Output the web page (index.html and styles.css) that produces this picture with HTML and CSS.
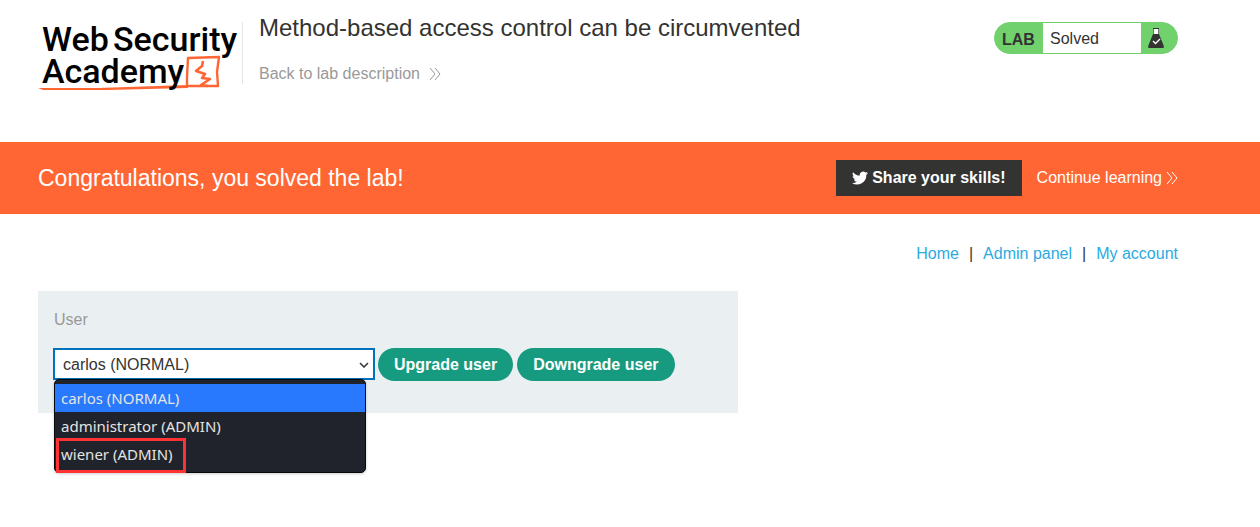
FILE: index.html
```html
<!DOCTYPE html>
<html lang="en">
<head>
<meta charset="utf-8">
<meta name="viewport" content="width=device-width, initial-scale=1">
<title>Method-based access control can be circumvented</title>
<link rel="stylesheet" href="styles.css">
</head>
<body>
<header class="lab-header wrap">
  <a class="logo" href="#" aria-label="Web Security Academy">
    <svg width="204" height="76" viewBox="0 0 204 76">
      <g fill="none" stroke="#ff6633" stroke-linejoin="round">
        <path stroke-width="2.4" d="M149 69 149 59 150 40 181 39 179 54 180 68 149 68"/>
        <path stroke-width="2.6" d="M165 43 164 48 158 53 167 56 164 60 172 61 163 67 170 68"/>
      </g>
      <path fill="#ff6633" d="M0 70 60 70 150 67 150 70 70 72 5 72Z"/>
      <text class="logo-text" x="4" y="33">Web</text>
      <text class="logo-text" x="75" y="33">Security</text>
      <text class="logo-text" x="4" y="65">Academy</text>
    </svg>
  </a>
  <div class="title">
    <h1>Method-based access control can be circumvented</h1>
    <a class="back" href="#">Back to lab description
      <svg width="12" height="12" viewBox="0 0 12 12" fill="none" stroke="currentColor"><path d="M1 0 6 6 1 12M6 0 11 6 6 12"/></svg>
    </a>
  </div>
  <div class="status">
    <span class="status-label">LAB</span>
    <span class="status-text">Solved</span>
    <svg class="flask" width="16" height="20" viewBox="0 0 16 20"><path fill="#fff" d="M6 1h4v6H6z"/><path fill="#333332" d="M5 0h6v1H5z"/><path fill="#777" d="M5 1h1v5H5zM10 1h1v5h-1z"/><path fill="#333332" d="M5 6h6l5 12.500q0 1.500-1.500 1.500h-13Q0 20 0 18.500Z"/><path d="m5 13 2.500 2.500L12 11" fill="none" stroke="#fff" stroke-width="1.300"/></svg>
  </div>
</header>
<section class="banner wrap">
  <h2>Congratulations, you solved the lab!</h2>
  <button class="share" type="button">
    <svg width="16" height="16" viewBox="0 0 24 24" fill="#fff"><path d="M24 4.600a10 10 0 0 1-2.800.8 4.900 4.900 0 0 0 2.100-2.700 10 10 0 0 1-3.100 1.200 4.900 4.900 0 0 0-8.400 4.500A14 14 0 0 1 1.700 3.200a4.900 4.900 0 0 0 1.500 6.500 4.900 4.900 0 0 1-2.200-.6 4.900 4.900 0 0 0 3.900 4.900 4.900 4.900 0 0 1-2.200.1 4.900 4.900 0 0 0 4.600 3.400A9.900 9.900 0 0 1 0 19.500a14 14 0 0 0 21.500-12.400A10 10 0 0 0 24 4.600Z"/></svg>
    Share your skills!
  </button>
  <a class="continue" href="#">Continue learning
    <svg width="12" height="12" viewBox="0 0 12 12" fill="none" stroke="currentColor"><path d="M1 0 6 6 1 12M6 0 11 6 6 12"/></svg>
  </a>
</section>
<main class="wrap">
  <nav class="links">
    <a href="#">Home</a><span>|</span><a href="#">Admin panel</a><span>|</span><a href="#">My account</a>
  </nav>
  <form class="panel">
    <label for="user">User</label>
    <div class="controls">
      <div class="picker">
        <select id="user">
          <option>carlos (NORMAL)</option>
          <option>administrator (ADMIN)</option>
          <option>wiener (ADMIN)</option>
        </select>
        <svg class="chevron" width="10" height="6" viewBox="0 0 10 6" fill="none" stroke="#333332" stroke-width="1.500"><path d="m1 1 4 4 4-4"/></svg>
        <ul class="menu">
          <li class="active">carlos (NORMAL)</li>
          <li>administrator (ADMIN)</li>
          <li class="marked">wiener (ADMIN)</li>
        </ul>
      </div>
      <button class="pill" type="button">Upgrade user</button>
      <button class="pill" type="button">Downgrade user</button>
    </div>
  </form>
</main>
</body>
</html>
```
FILE: styles.css
```css
*, *::after { box-sizing: border-box; }
body {
  margin: 0;
  min-height: 100vh;
  background: #fff;
  color: #333332;
  font: 16px/20px "Liberation Sans", Arial, sans-serif;
}
a { color: inherit; text-decoration: none; }
h1, h2 { margin: 0; font-size: 24px; line-height: 28px; font-weight: 400; }
svg { flex: none; }
.wrap { padding-left: 38px; padding-right: 82px; }

.lab-header { display: flex; align-items: flex-start; padding-top: 14px; padding-bottom: 48px; }
.logo { padding-top: 4px; }
.logo svg { display: block; }
.logo-text {
  font: 500 34px Roboto, "Liberation Sans", sans-serif;
  fill: #000;
}
.title { flex: 1; height: 62px; margin-top: 8px; padding-left: 16px; border-left: 1px solid #e4e4e4; margin-bottom: 10px; }
.title h1 { margin-top: -8px; }
.back { display: flex; align-items: center; gap: 9px; margin-top: 22px; color: #999; }

.status {
  display: flex;
  align-items: center;
  height: 32px;
  width: 184px;
  margin-top: 8px;
  border: 1px solid #70d16d;
  border-radius: 16px;
  background: #70d16d;
}
.status-label { width: 48px; padding: 3px 0 0 7px; font-weight: 700; }
.status-text { width: 98px; padding: 1px 0 0 7px; background: #fff; line-height: 29px; }
.flask { margin-left: 7px; }

.banner { display: flex; align-items: center; height: 72px; background: #ff6633; color: #fff; }
.banner h2 { flex: 1; font-size: 23px; }
.share {
  display: flex;
  align-items: center;
  gap: 4px;
  height: 36px;
  margin-right: 15px;
  padding: 0 16px;
  border: 0;
  background: #333332;
  color: #fff;
  font: 700 16px/20px "Liberation Sans", Arial, sans-serif;
}
.continue { display: flex; align-items: center; gap: 4px; }

.links { display: flex; justify-content: flex-end; gap: 10px; padding-top: 30px; color: #29abe2; }
.links span { color: #333332; }

main { padding-bottom: 80px; }
.panel { max-width: 700px; height: 122px; margin-top: 27px; padding: 19px 15px; background: #eaeff2; }
.panel label { display: block; color: #999; padding-left: 1px; }
.controls { display: flex; gap: 4px; margin-top: 18px; }
.picker { position: relative; width: 322px; margin-right: -1px; }
select {
  appearance: none;
  display: block;
  width: 100%;
  height: 32px;
  padding: 1px 8px 0;
  border: 2px solid #0071bc;
  border-radius: 0;
  background: #fff;
  color: #333332;
  font: 16px/20px "Liberation Sans", Arial, sans-serif;
}
.chevron { position: absolute; top: 14px; right: 6px; pointer-events: none; }
.menu {
  position: absolute;
  top: 31px;
  left: 1px;
  width: 312px;
  margin: 0;
  padding: 4px 0;
  border: 1px solid #08090c;
  border-radius: 5px;
  background: #20232c;
  color: #e4e4e0;
  list-style: none;
  font: 15px/28px "Noto Sans", sans-serif;
  box-shadow: 0 1px 3px #0003;
}
.menu li { position: relative; padding-left: 6px; }
.menu .active { background: #2979ff; }
.marked::after {
  content: "";
  position: absolute;
  top: -2px;
  left: 1px;
  width: 130px;
  height: 35px;
  border: 3px solid #ff3333;
}
.pill {
  height: 33px;
  padding: 0 16px;
  border: 0;
  border-radius: 17px;
  background: #179b80;
  color: #fff;
  font: 700 16px/20px "Liberation Sans", Arial, sans-serif;
}
```
